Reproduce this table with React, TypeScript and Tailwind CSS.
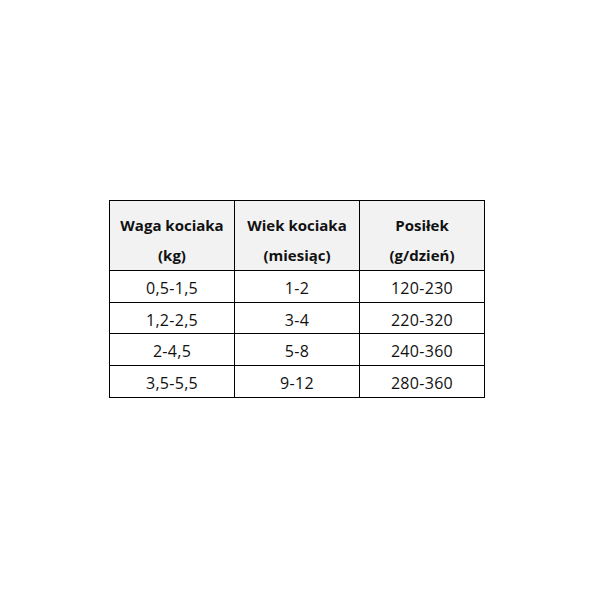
const HEADERS = [
  ["Waga kociaka", "(kg)"],
  ["Wiek kociaka", "(miesiąc)"],
  ["Posiłek", "(g/dzień)"],
];

const ROWS = [
  ["0,5-1,5", "1-2", "120-230"],
  ["1,2-2,5", "3-4", "220-320"],
  ["2-4,5", "5-8", "240-360"],
  ["3,5-5,5", "9-12", "280-360"],
];

export default function App() {
  return (
    <div className="h-[600px] w-[600px] bg-white pl-[109px] pt-[200px] font-['Open_Sans',sans-serif] text-[#111]">
      <table className="w-[376px] table-fixed border-collapse border border-black">
        <thead>
          <tr className="h-[70px] bg-[#f2f2f2]">
            {HEADERS.map(([top, bottom]) => (
              <th
                key={top}
                className="w-[125px] border border-black p-0 pt-[9px] align-top text-center text-[15px] font-bold leading-[30px]"
              >
                <div>{top}</div>
                <div>{bottom}</div>
              </th>
            ))}
          </tr>
        </thead>
        <tbody>
          {ROWS.map((row) => (
            <tr key={row[0]} className="h-[31.7px]">
              {row.map((cell, i) => (
                <td
                  key={i}
                  className="border border-black p-0 pt-[3px] text-center text-[16px] leading-none tracking-[0.3px]"
                >
                  {cell}
                </td>
              ))}
            </tr>
          ))}
        </tbody>
      </table>
    </div>
  );
}
